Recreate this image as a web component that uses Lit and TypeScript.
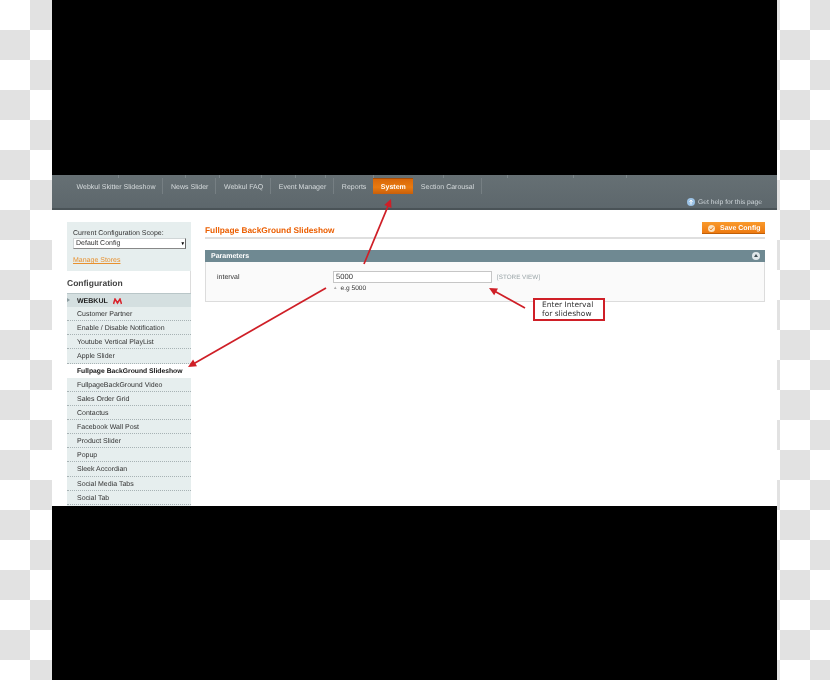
import { LitElement, html, css, svg } from "lit";
import { customElement } from "lit/decorators.js";

const NAV = ["Webkul Skitter Slideshow", "News Slider", "Webkul FAQ", "Event Manager", "Reports", "System", "Section Carousal"];
const ITEMS = ["Customer Partner", "Enable / Disable Notification", "Youtube Vertical PlayList", "Apple Slider", "Fullpage BackGround Slideshow", "FullpageBackGround Video", "Sales Order Grid", "Contactus", "Facebook Wall Post", "Product Slider", "Popup", "Sleek Accordian", "Social Media Tabs", "Social Tab", ""];
const TICKS = [66, 33, 41, 33, 29, 47, 69, 63, 65, 52, 90];

@customElement("app-root")
export class AppRoot extends LitElement {
  static styles = css`
    :host { display: block; width: 830px; height: 680px; overflow: hidden; font-family: "Liberation Sans", Arial, sans-serif; text-rendering: geometricPrecision; }
    .page {
      width: 830px; height: 680px; padding: 0 53px 0 52px; box-sizing: border-box;
      background-color: #fff;
      background-image: conic-gradient(#e2e2e2 25%, #fff 25% 50%, #e2e2e2 50% 75%, #fff 75%);
      background-size: 60px 60px;
    }
    .black { background: #000; }
    .top { height: 175px; }
    .bottom { height: 174px; }
    .shot { position: relative; height: 331px; overflow: hidden; background: #fff; display: flex; flex-direction: column; filter: blur(0.25px); }
    .header {
      height: 33px; flex: none; position: relative;
      background: linear-gradient(#667074, #5d676c);
      border-bottom: 2px solid #4a5357;
    }
    .ticks { display: flex; height: 3px; padding-left: 66px; }
    .ticks i { display: block; width: 1px; background: #7d878b; flex: none; }
    .nav { display: flex; padding: 0 0 0 17px; height: 16px; align-items: stretch; }
    .nav span { display: flex; align-items: center; padding: 2px 7px 0 7.6px; font-size: 7px; color: #d5dadc; border-right: 1px solid #767f83; white-space: nowrap; }
    .nav span.on { color: #fff; font-weight: 700; padding: 1px 7.5px 0; border: 0; border-top: 1px solid #a94e08; background: linear-gradient(#d96708, #e87a10 55%, #c95f0a); margin-left: -1px; }
    .help { display: flex; justify-content: flex-end; align-items: center; gap: 3px; padding-right: 15px; margin-top: 4px; font-size: 6.7px; color: #cfd6da; }
    .help svg { flex: none; }
    .body { flex: 1; display: flex; padding: 12px 12px 0 15px; gap: 14px; min-height: 0; }
    .side { width: 124px; flex: none; }
    .scope { height: 49px; box-sizing: border-box; background: #e6eeee; padding: 8px 5px 0 6px; font-size: 7px; color: #333; }
    .sel { height: 11px; box-sizing: border-box; margin-top: 1px; background: #fff; border: 1px solid #d0d6d7; border-right-color: #666; border-bottom-color: #888; font-size: 7px; line-height: 10px; padding-left: 2px; display: flex; justify-content: space-between; color: #333; }
    .sel b { font-size: 5px; color: #000; padding-right: 1px; line-height: 10px; }
    .manage { display: block; margin-top: 8px; color: #e8912f; text-decoration: underline; font-size: 7px; }
    .cfg { height: 22px; line-height: 24px; font-size: 8.5px; font-weight: 700; color: #444; background: #fff; box-sizing: border-box; border-right: 1px solid #dcdcdc; }
    .group { height: 14px; background: #d4dfe0; display: flex; align-items: center; font-size: 7px; font-weight: 700; color: #222; padding: 1px 0 0 10px; gap: 5px; position: relative; border-top: 1px solid #b9c6c8; box-sizing: border-box; }
    .group i { position: absolute; left: 0; top: 4px; border-left: 3px solid #8a9a9e; border-top: 2px solid transparent; border-bottom: 2px solid transparent; }
    .list { background: #e6eeee; }
    .item { height: 14.14px; box-sizing: border-box; padding-left: 10px; line-height: 15.5px; font-size: 7px; color: #333; border-bottom: 1px dotted #a7b2b4; white-space: nowrap; }
    .item.on { background: #fff; color: #111; font-weight: 700; font-size: 6.75px; border-bottom: 0; }
    .main { flex: 1; min-width: 0; }
    .titlebar { display: flex; justify-content: space-between; align-items: flex-start; height: 15px; border-bottom: 2px solid #dfdfdf; }
    .title { color: #eb5e00; font-weight: 700; font-size: 8.3px; line-height: 16px; }
    .save { width: 63px; height: 12px; box-sizing: border-box; display: flex; align-items: center; gap: 5px; padding: 1px 0 0 6px; background: linear-gradient(#f99a2c, #ee7a10); border-bottom: 1px solid #c05f08; color: #fff; font-weight: 700; font-size: 7px; }
    .save svg { flex: none; }
    .bar { margin-top: 11px; height: 12px; box-sizing: border-box; background: #6f8992; color: #fff; font-weight: 700; font-size: 7px; padding: 0 5px 0 6px; display: flex; justify-content: space-between; align-items: center; }
    .bar span { padding-top: 1px; }
    .bar i { width: 8px; height: 8px; border-radius: 50%; background: #dfe7ea; position: relative; }
    .bar i::after { content: ""; position: absolute; left: 2px; top: 2px; border-bottom: 3px solid #3f4e54; border-left: 2px solid transparent; border-right: 2px solid transparent; }
    .panel { height: 40px; box-sizing: border-box; background: #fafafa; border: 1px solid #dcdcdc; border-top: 0; display: grid; grid-template-columns: 116px 159px auto; align-content: start; padding: 9px 0 0 11px; font-size: 7px; color: #333; }
    .label { line-height: 13.5px; }
    .input { height: 12px; box-sizing: border-box; border: 1px solid #c6c6c6; background: #fff; padding-left: 2px; line-height: 10.5px; font-size: 7.6px; color: #333; }
    .scopeTag { padding-left: 5px; line-height: 13px; color: #9aa5a8; font-size: 6.3px; }
    .hint { grid-column: 2; margin-top: -1.5px; line-height: 9.5px; font-size: 6.6px; color: #333; }
    .hint i { color: #aaa; font-style: normal; margin-right: 3px; font-size: 4.5px; vertical-align: 1px; }
    .anno { position: absolute; left: 481px; top: 123px; width: 72px; height: 23px; box-sizing: border-box; border: 2px solid #cf1f27; background: #fff; padding: 0 0 0 7px; font: 7.5px/9px "DejaVu Sans", sans-serif; color: #333; }
    svg.arrows { position: absolute; left: 0; top: 0; width: 725px; height: 331px; pointer-events: none; }
  `;

  render() {
    return html`<div class="page">
      <div class="black top"></div>
      <div class="shot">
        <div class="header">
          <div class="ticks">${TICKS.map((w) => html`<i style="margin-right:${w}px"></i>`)}</div>
          <div class="nav">${NAV.map((n) => html`<span class=${n === "System" ? "on" : ""}>${n}</span>`)}</div>
          <div class="help">
            <svg width="8" height="8" viewBox="0 0 8 8"><circle cx="4" cy="4" r="4" fill="#9cc3e6"/><path d="M4 6.5V3M2.5 3.8L4 2l1.5 1.8" fill="none" stroke="#fff" stroke-width="1"/></svg>
            <span>Get help for this page</span>
          </div>
        </div>
        <div class="body">
          <div class="side">
            <div class="scope">
              Current Configuration Scope:
              <div class="sel"><span>Default Config</span><b>▾</b></div>
              <span class="manage">Manage Stores</span>
            </div>
            <div class="cfg">Configuration</div>
            <div class="group"><i></i>WEBKUL
              <svg width="9" height="7" viewBox="0 0 9 7"><path d="M0.5 6 L2 1 L4.5 5 L7 1 L8.5 6" fill="none" stroke="#d9232b" stroke-width="1.5"/></svg>
            </div>
            <div class="list">${ITEMS.map((t) => html`<div class="item ${t.startsWith("Fullpage B") ? "on" : ""}">${t}</div>`)}</div>
          </div>
          <div class="main">
            <div class="titlebar"><div class="title">Fullpage BackGround Slideshow</div><div class="save">
              <svg width="7" height="7" viewBox="0 0 7 7"><circle cx="3.5" cy="3.5" r="3.5" fill="#fbe3c2"/><path d="M1.8 3.6L3 4.9 5.3 2.2" fill="none" stroke="#ee7a10" stroke-width="1"/></svg>
              <span>Save Config</span></div></div>
            <div class="bar"><span>Parameters</span><i></i></div>
            <div class="panel">
              <div class="label">interval</div>
              <div class="input">5000</div>
              <div class="scopeTag">[STORE VIEW]</div>
              <div class="hint"><i>▲</i>e.g 5000</div>
            </div>
          </div>
        </div>
        <svg class="arrows" viewBox="0 0 725 331">
          ${[[312, 89, 339, 24], [274, 113, 136, 192], [473, 133, 437, 113]].map(([x1, y1, x2, y2]) => {
            const a = Math.atan2(y2 - y1, x2 - x1), l = 9, w = 0.45;
            const p = [x2, y2, x2 - l * Math.cos(a - w), y2 - l * Math.sin(a - w), x2 - l * Math.cos(a + w), y2 - l * Math.sin(a + w)].join(" ");
            return svg`<line x1=${x1} y1=${y1} x2=${x2 - 4 * Math.cos(a)} y2=${y2 - 4 * Math.sin(a)} stroke="#cf1f27" stroke-width="1.7"/><polygon points=${p} fill="#cf1f27"/>`;
          })}
        </svg>
        <div class="anno">Enter Interval<br />for slideshow</div>
      </div>
      <div class="black bottom"></div>
    </div>`;
  }
}
